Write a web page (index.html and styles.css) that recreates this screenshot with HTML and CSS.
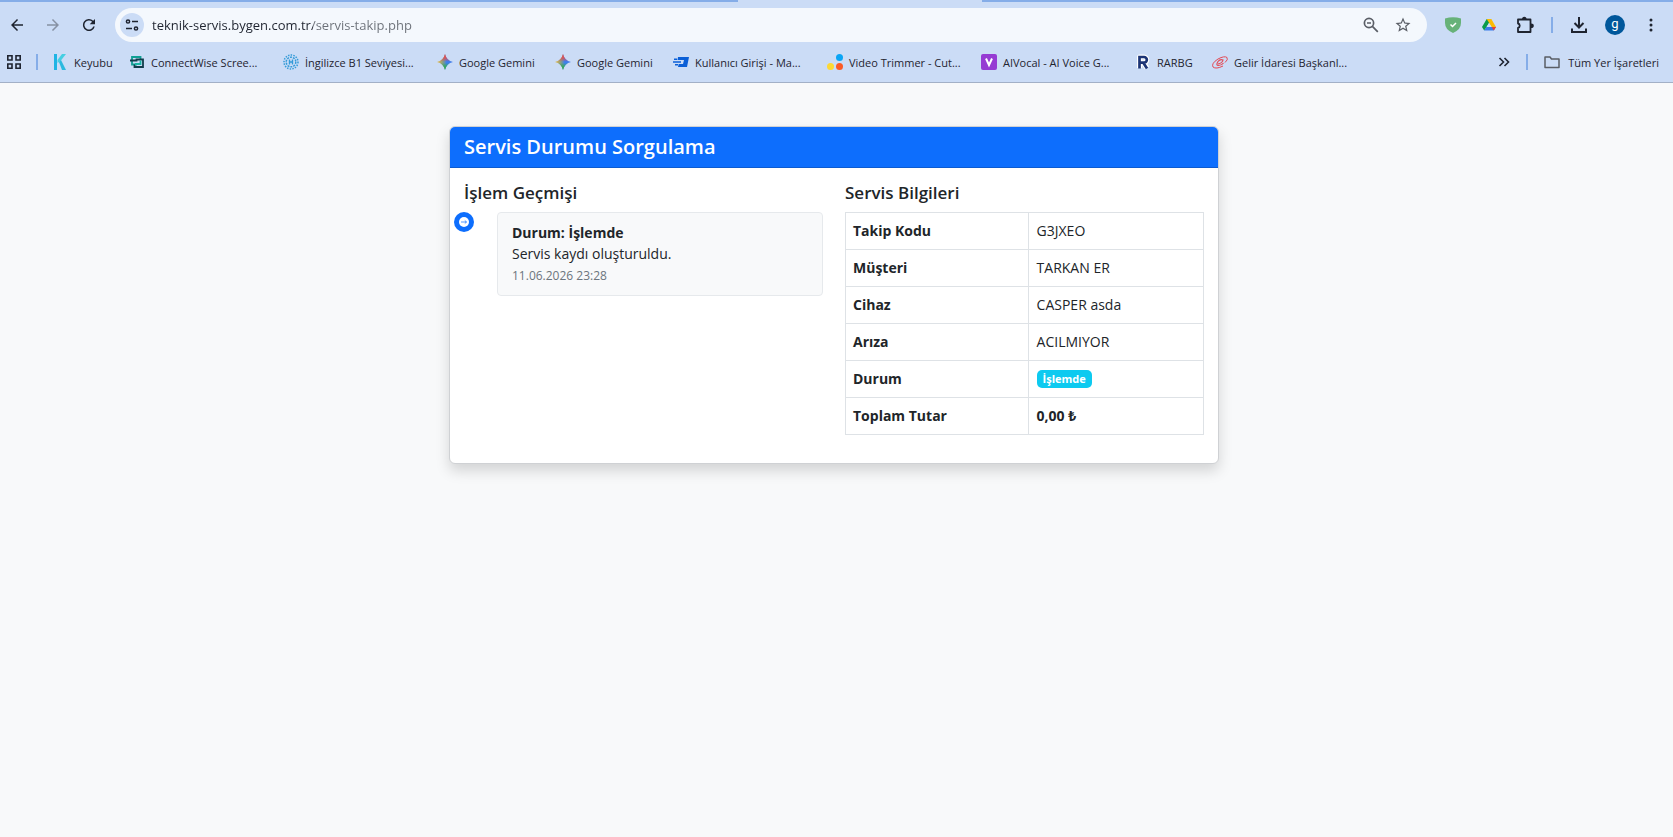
FILE: index.html
```html
<!DOCTYPE html>
<html lang="tr">
<head>
  <meta charset="UTF-8">
  <title>Servis Durumu Sorgulama</title>
  <link rel="stylesheet" href="styles.css">
</head>
<body>

  <header class="browser">
    <div class="tab-strip"><div class="active-tab"></div></div>

    <div class="toolbar">
      <button class="tool" aria-label="Geri">
        <svg width="18" height="18" viewBox="0 0 24 24"><path d="M20 11H7.800l5.600-5.600L12 4l-8 8 8 8 1.400-1.400L7.800 13H20z"/></svg>
      </button>
      <button class="tool muted" aria-label="İleri">
        <svg width="18" height="18" viewBox="0 0 24 24"><path d="M4 11h12.200l-5.600-5.600L12 4l8 8-8 8-1.400-1.400 5.600-5.600H4z"/></svg>
      </button>
      <button class="tool" aria-label="Yenile">
        <svg width="18" height="18" viewBox="0 0 24 24"><path d="M17.600 6.400A8 8 0 1 0 19.700 14h-2.100A6 6 0 1 1 16.200 7.800L13 11h7V4z"/></svg>
      </button>

      <div class="address">
        <button class="site-info" aria-label="Site bilgileri">
          <svg width="16" height="16" viewBox="0 0 16 16" fill="none" stroke="currentColor" stroke-width="1.5"><circle cx="4" cy="4.500" r="1.600"/><path d="M8 4.500h6M2 11.500h6"/><circle cx="12" cy="11.500" r="1.600"/></svg>
        </button>
        <input class="url" type="text" aria-label="Adres çubuğu" value="teknik-servis.bygen.com.tr/servis-takip.php">
        <button class="address-tool" aria-label="Yakınlaştırma">
          <svg width="18" height="18" viewBox="0 0 18 18" fill="none" stroke="currentColor" stroke-width="1.700"><circle cx="7" cy="7" r="4.600"/><path d="M10.400 10.400l5.400 5.400M5 7h4"/></svg>
        </button>
        <button class="address-tool" aria-label="Yer işareti ekle">
          <svg width="18" height="18" viewBox="0 0 24 24"><path d="M22 9.240l-7.190-.62L12 2 9.190 8.630 2 9.240l5.460 4.730L5.820 21 12 17.270 18.180 21l-1.630-7.030zM12 15.400l-3.760 2.270 1-4.280-3.320-2.880 4.380-.38L12 6.100l1.710 4.040 4.380.38-3.320 2.880 1 4.280z"/></svg>
        </button>
      </div>

      <button class="tool" aria-label="Koruma">
        <svg width="16" height="16" viewBox="0 0 16 16"><path d="M0 1.500Q8-1 16 1.500V6q0 6.500-8 10-8-3.500-8-10z" fill="#67b279"/><path d="M5.500 7.500l2 2L11 6" fill="none" stroke="#fff" stroke-width="1.500"/></svg>
      </button>
      <button class="tool" aria-label="Drive">
        <svg width="14" height="14" viewBox="0 0 14 14"><path d="M4.700 1h4.600L7 5 4.300 9.500 2.200 12.500 0 9z" fill="#0a9b4b"/><path d="M4.700 1h4.600L14 9H9.600z" fill="#fbbc04"/><path d="M4.300 9H14l-2.200 3.600H2.200z" fill="#3a7cec"/><path d="M9.700 9H14l-2.200 3.600z" fill="#ea4335"/><path d="M7 4.900L9.500 9h-5z" fill="#cbdcf6"/></svg>
      </button>
      <button class="tool" aria-label="Uzantılar">
        <svg width="18" height="18" viewBox="0 0 18 18"><path d="M2 3.500h12.500V16H2v-4.200a2.200 2.200 0 0 0 0-4.300z" fill="none" stroke="currentColor" stroke-width="1.800" stroke-linejoin="round"/><path d="M6 3.500a2.300 2.800 0 0 1 4.600 0zM15 7.500a2.800 2.300 0 0 1 0 4.600z"/></svg>
      </button>
      <span class="divider"></span>
      <button class="tool" aria-label="İndirilenler">
        <svg width="18" height="18" viewBox="0 0 18 18" fill="none" stroke="currentColor" stroke-width="2"><path d="M9 1v10M4.500 7L9 11.500 13.500 7M2 12.500V16h14v-3.500"/></svg>
      </button>
      <button class="tool" aria-label="Profil"><span class="avatar">g</span></button>
      <button class="tool" aria-label="Menü">
        <svg width="18" height="18" viewBox="0 0 18 18"><circle cx="9" cy="4" r="1.500"/><circle cx="9" cy="9" r="1.500"/><circle cx="9" cy="14" r="1.500"/></svg>
      </button>
    </div>

    <nav class="bookmarks">
      <button class="apps" aria-label="Uygulamalar">
        <svg width="16" height="16" viewBox="0 0 16 16" fill="none" stroke="currentColor" stroke-width="1.600"><path d="M1.800 1.800H6V6H1.800zM10 1.800h4.200V6H10zM1.800 10H6v4.200H1.800zM10 10h4.200v4.200H10z"/></svg>
      </button>
      <span class="divider"></span>

      <div class="bookmark-list">
        <a class="bookmark narrow" href="#">
          <svg width="16" height="16" viewBox="0 0 16 16"><path d="M2 0h3v16H2z" fill="#1fb4e4"/><path d="M10 0h4L8.500 7l-3 2V6z" fill="#45cfe2"/><path d="M7 8l2-2 5 10h-4z" fill="#2cb9df"/></svg>
          <span>Keyubu</span>
        </a>
        <a class="bookmark cut" href="#">
          <svg width="16" height="16" viewBox="0 0 16 16" fill="none" stroke-width="1.800"><path d="M11.500 5V3H3v7.500h5" stroke="#0f9f94"/><path d="M1 6.500h6.500v-1H14V13H5.500v-2.500" stroke="#123d4c"/><path d="M6 10h5.500V6.500" stroke="#18b5a4"/></svg>
          <span>ConnectWise Scree...</span>
        </a>
        <a class="bookmark cut" href="#">
          <svg width="16" height="16" viewBox="0 0 16 16" fill="none" stroke="#349bd8"><circle cx="8" cy="8" r="7" stroke-width="1.500" stroke-dasharray="1.500 1.200"/><circle cx="8" cy="8" r="4.800" stroke-width="1.500" stroke-dasharray="2 1"/><path d="M6.500 5.500v5M9.500 5.500v5M6.500 8h3" stroke-width="1.400"/></svg>
          <span>İngilizce B1 Seviyesi...</span>
        </a>
        <a class="bookmark medium" href="#">
          <svg width="16" height="16" viewBox="0 0 16 16"><defs><linearGradient id="gem" x1="0" y1="0.500" x2="1" y2="0.500"><stop offset="0" stop-color="#f2bd35"/><stop offset="0.400" stop-color="#7d9a90"/><stop offset="0.600" stop-color="#3b7ff0"/><stop offset="1" stop-color="#3f7eea"/></linearGradient><linearGradient id="gemv" x1="0" y1="0" x2="0" y2="1"><stop offset="0" stop-color="#ef4a45"/><stop offset="0.250" stop-color="#ef4a45" stop-opacity="0.800"/><stop offset="0.480" stop-color="#ef4a45" stop-opacity="0"/><stop offset="0.550" stop-color="#35a95b" stop-opacity="0"/><stop offset="0.800" stop-color="#35a95b"/></linearGradient></defs><path d="M8 0q1.500 6.500 8 8-6.500 1.500-8 8-1.500-6.500-8-8 6.500-1.500 8-8z" fill="url(#gem)"/><path d="M8 0q1.500 6.500 8 8-6.500 1.500-8 8-1.500-6.500-8-8 6.500-1.500 8-8z" fill="url(#gemv)"/></svg>
          <span>Google Gemini</span>
        </a>
        <a class="bookmark medium" href="#">
          <svg width="16" height="16" viewBox="0 0 16 16"><path d="M8 0q1.500 6.500 8 8-6.500 1.500-8 8-1.500-6.500-8-8 6.500-1.500 8-8z" fill="url(#gem)"/><path d="M8 0q1.500 6.500 8 8-6.500 1.500-8 8-1.500-6.500-8-8 6.500-1.500 8-8z" fill="url(#gemv)"/></svg>
          <span>Google Gemini</span>
        </a>
        <a class="bookmark cut" href="#">
          <svg width="16" height="16" viewBox="0 0 16 16" fill="#0b5fd7"><path d="M5 3h11l-2 10H5l.7-3H10l1-4H4.500z"/><path d="M1 4.500h3V6H1zM0 7.200h8v1.600H0zM2 10h3v1.500H2z"/></svg>
          <span>Kullanıcı Girişi - Ma...</span>
        </a>
        <a class="bookmark cut" href="#">
          <svg width="16" height="16" viewBox="0 0 16 16"><circle cx="12.500" cy="3.500" r="3.500" fill="#0ba5f5"/><circle cx="3.500" cy="12.500" r="3.500" fill="#fdd835"/><circle cx="12.500" cy="12.500" r="3.500" fill="#fb5a26"/></svg>
          <span>Video Trimmer - Cut...</span>
        </a>
        <a class="bookmark cut" href="#">
          <svg width="16" height="16" viewBox="0 0 16 16"><rect width="16" height="16" rx="2" fill="#963bd3"/><path d="M5 4.500L8 11l3-6.500" fill="none" stroke="#fff" stroke-width="2"/></svg>
          <span>AIVocal - AI Voice G...</span>
        </a>
        <a class="bookmark narrow" href="#">
          <svg width="16" height="16" viewBox="0 0 16 16" fill="none"><path d="M4.500 14V3H9a2.800 2.800 0 0 1 0 5.700H5M8.500 9l3.500 5" stroke="#fff" stroke-width="5" stroke-linejoin="round"/><path d="M4.500 14.500V3H9a2.800 2.800 0 0 1 0 5.700H5M8.500 9l3.500 5.500" stroke="#1c3475" stroke-width="2.700"/></svg>
          <span>RARBG</span>
        </a>
        <a class="bookmark cut" href="#">
          <svg width="16" height="16" viewBox="0 0 16 16" fill="none" stroke="#e34a55"><path d="M11 12Q4 15.500 1 13-1 9.500 6 5q6.500-3.500 9-1.500 1.500 2-2 5" stroke-width="1"/><path d="M6 10q4.500-1 5-4-3-1-5 1.500-2.500 4 .5 4 3 0 5-2.500" stroke-width="1.200"/></svg>
          <span>Gelir İdaresi Başkanl...</span>
        </a>
      </div>

      <button class="more" aria-label="Diğer yer işaretleri">
        <svg width="12" height="12" viewBox="0 0 12 12" fill="none" stroke="currentColor" stroke-width="1.600"><path d="M1.500 2l4 4-4 4M6.500 2l4 4-4 4"/></svg>
      </button>
      <span class="divider"></span>
      <a class="bookmark all" href="#">
        <svg width="16" height="16" viewBox="0 0 16 16" fill="none" stroke="#5a5e66" stroke-width="1.500"><path d="M1 3h5l1.500 2H15v8.500H1z" stroke-linejoin="round"/></svg>
        <span>Tüm Yer İşaretleri</span>
      </a>
    </nav>
  </header>

  <main class="page">
    <section class="card">
      <h4 class="card-header">Servis Durumu Sorgulama</h4>
      <div class="card-body">

        <div class="col">
          <h5>İşlem Geçmişi</h5>
          <ul class="timeline">
            <li class="timeline-item">
              <span class="timeline-icon">
                <svg width="10" height="10" viewBox="0 0 10 10"><circle cx="5" cy="5" r="5" fill="#fff"/><path d="M2 5h5.500M5.800 3.500L7.500 5 5.800 6.500" fill="none" stroke="#0d6efd" stroke-width="0.700"/></svg>
              </span>
              <div class="timeline-content">
                <strong>Durum: İşlemde</strong>
                <p>Servis kaydı oluşturuldu.</p>
                <small>11.06.2026 23:28</small>
              </div>
            </li>
          </ul>
        </div>

        <div class="col">
          <h5>Servis Bilgileri</h5>
          <table class="info">
            <tr><th>Takip Kodu</th><td>G3JXEO</td></tr>
            <tr><th>Müşteri</th><td>TARKAN ER</td></tr>
            <tr><th>Cihaz</th><td>CASPER asda</td></tr>
            <tr><th>Arıza</th><td>ACILMIYOR</td></tr>
            <tr><th>Durum</th><td><span class="badge">İşlemde</span></td></tr>
            <tr><th>Toplam Tutar</th><td><strong>0,00 ₺</strong></td></tr>
          </table>
        </div>

      </div>
    </section>
  </main>

</body>
</html>
```
FILE: styles.css
```css
* {
  box-sizing: border-box;
}

body {
  margin: 0;
  background: #f8f9fa;
  color: #212529;
  font-family: "Segoe UI", "Open Sans", "Noto Sans", sans-serif;
  font-size: 14px;
}

h4, h5, p, ul {
  margin: 0;
  padding: 0;
}

button {
  display: flex;
  align-items: center;
  justify-content: center;
  padding: 0;
  border: 0;
  background: none;
  color: inherit;
  fill: currentColor;
  font: inherit;
}

svg {
  flex: none;
}

/* browser */
.browser {
  background: #cbdcf6;
  border-bottom: 1px solid #a3b0c6;
  color: #1f2430;
}

.tab-strip {
  display: flex;
  height: 2px;
  background: #85ade8;
}

.active-tab {
  width: 244px;
  margin-left: 738px;
  background: #cbdcf6;
}

.toolbar {
  display: flex;
  align-items: center;
  gap: 2px;
  padding: 6px 5px 0 0;
}

.tool {
  width: 34px;
  height: 34px;
}

.muted {
  color: #8791a3;
}

.address {
  flex: 1;
  display: flex;
  align-items: center;
  gap: 8px;
  height: 34px;
  margin: 0 7px;
  padding: 0 12px 0 5px;
  border-radius: 17px;
  background: #f4f8fd;
}

.site-info {
  width: 24px;
  height: 24px;
  border-radius: 50%;
  background: #cbdcf6;
}

/* domain dark, path grey */
.url {
  flex: 1;
  min-width: 0;
  padding: 0;
  border: 0;
  outline: 0;
  background: linear-gradient(to right, #1f2430 161px, #6b7078 161px);
  -webkit-background-clip: text;
  background-clip: text;
  color: transparent;
  font: inherit;
  font-size: 13px;
}

.address-tool {
  width: 24px;
  height: 24px;
  color: #5a5e66;
}

.divider {
  width: 2px;
  height: 16px;
  margin: 0 7px;
  background: #85ade8;
}

.avatar {
  width: 20px;
  height: 20px;
  border-radius: 50%;
  background: #00579b;
  color: #fff;
  font-family: Roboto, sans-serif;
  font-size: 13px;
  line-height: 18px;
}

.bookmarks {
  display: flex;
  align-items: center;
  height: 40px;
  padding: 0 14px 0 6px;
  font-size: 11px;
}

.bookmarks .divider {
  margin: 0 14px;
}

.bookmark-list {
  flex: 1;
  display: flex;
  gap: 16px;
}

.bookmark {
  display: flex;
  align-items: center;
  gap: 6px;
  color: inherit;
  text-decoration: none;
  white-space: nowrap;
}

.narrow {
  width: 61px;
}

.medium {
  width: 102px;
}

.cut {
  width: 138px;
}

.more {
  margin-right: 2px;
}

.all {
  gap: 8px;
  margin-left: 2px;
}

/* page */
.page {
  padding: 43px 5px 43px 0;
}

.card {
  max-width: 770px;
  margin: 0 auto;
  border: 1px solid #cfd1d4;
  border-radius: 6px;
  background: #fff;
  box-shadow: 0 7px 14px rgba(0, 0, 0, 0.15);
  overflow: hidden;
}

.card-header {
  padding: 7px 14px;
  border-bottom: 1px solid #0c5bd0;
  background: #0d6efd;
  color: #fff;
  font-size: 20px;
  font-weight: 600;
  line-height: 26px;
}

.card-body {
  display: flex;
  gap: 22px;
  padding: 14px;
}

.col {
  flex: 1;
}

h5 {
  margin-bottom: 8px;
  font-size: 17px;
  font-weight: 600;
  line-height: 22px;
}

.timeline {
  list-style: none;
}

.timeline-item {
  position: relative;
  padding-left: 33px;
}

.timeline-icon {
  position: absolute;
  top: 0;
  left: -10px;
  display: flex;
  align-items: center;
  justify-content: center;
  width: 20px;
  height: 20px;
  border-radius: 50%;
  background: #0d6efd;
}

.timeline-content {
  padding: 9px 14px;
  border: 1px solid #e6e9ec;
  border-radius: 4px;
  background: #f8f9fa;
  line-height: 21px;
}

.timeline-content small {
  display: block;
  margin-top: 1px;
  color: #6c757d;
  font-size: 12px;
}

.info {
  width: 100%;
  margin-bottom: 14px;
  border-collapse: collapse;
}

.info th,
.info td {
  height: 37px;
  padding: 0 8px 2px;
  border: 1px solid #dee2e6;
  text-align: left;
}

.info th {
  width: 51%;
  padding-left: 7px;
}

.badge {
  display: inline-block;
  padding: 0 6px;
  border-radius: 5px;
  background: #0dcaf0;
  color: #fff;
  font-size: 11px;
  font-weight: 700;
  line-height: 18px;
}
```
